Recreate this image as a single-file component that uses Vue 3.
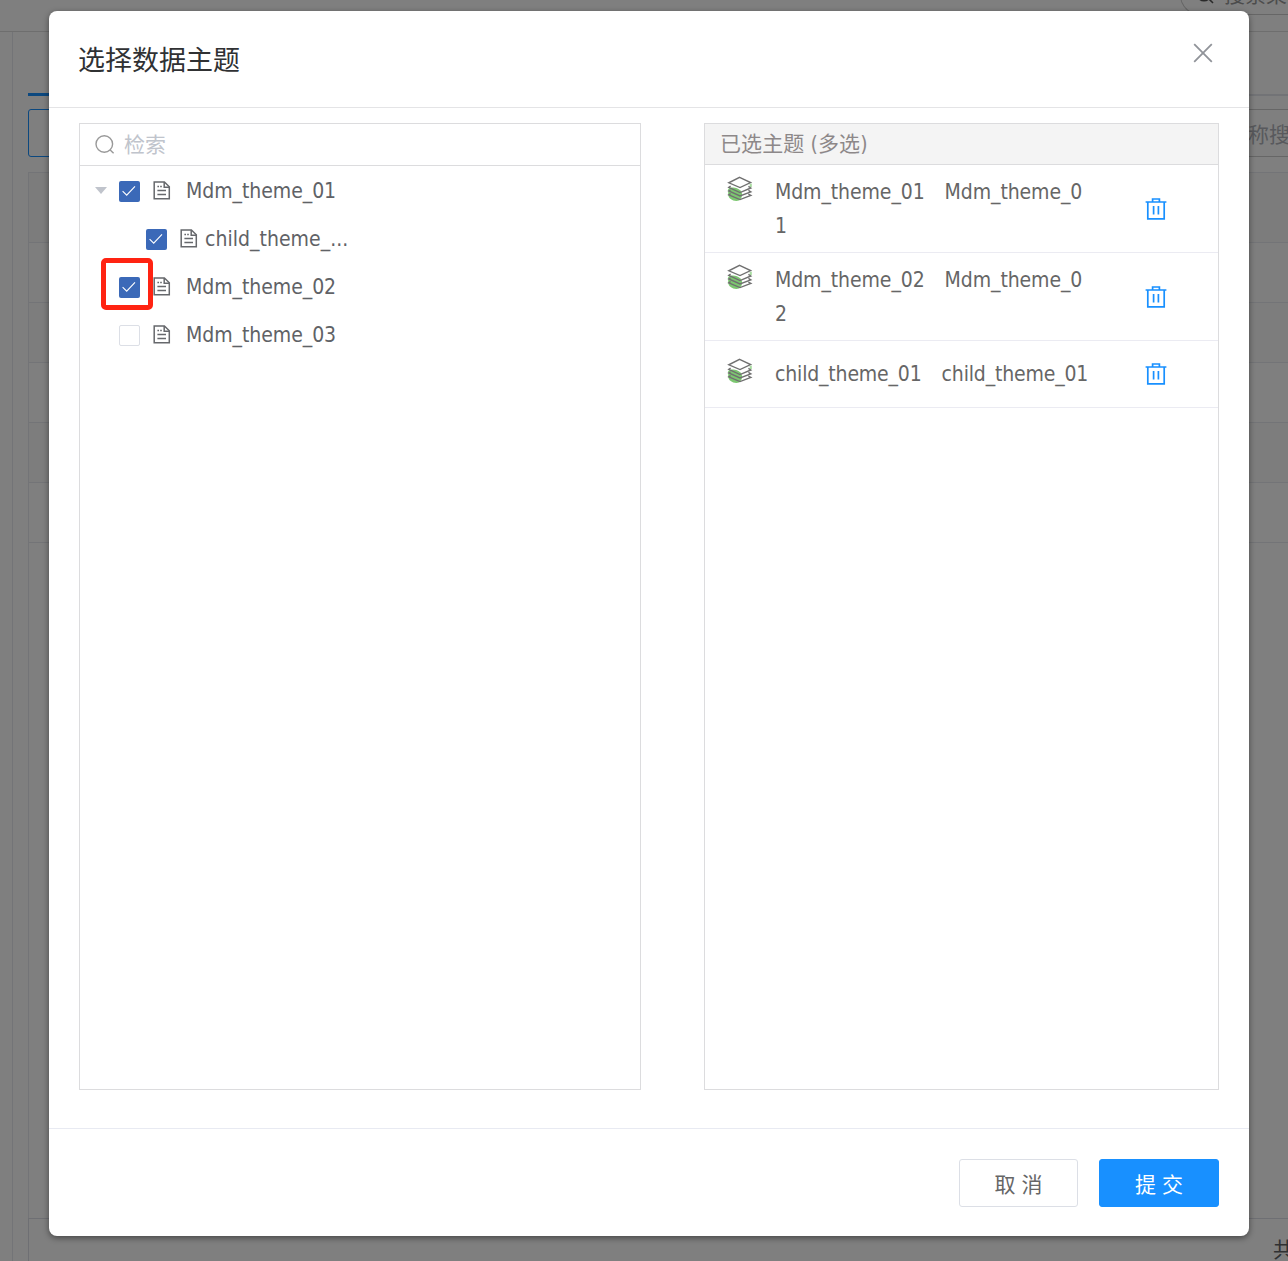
<script setup>
import { ref } from 'vue'

const tree = ref([
  { label: 'Mdm_theme_01', checked: true, open: true, child: false },
  { label: 'child_theme_...', checked: true, open: false, child: true },
  { label: 'Mdm_theme_02', checked: true, open: false, child: false, marked: true },
  { label: 'Mdm_theme_03', checked: false, open: false, child: false }
])

const selected = ref([
  { code: 'Mdm_theme_01', name: 'Mdm_theme_01' },
  { code: 'Mdm_theme_02', name: 'Mdm_theme_02' },
  { code: 'child_theme_01', name: 'child_theme_01' }
])

const tableRows = [0, 1, 2, 3, 4]
</script>

<template>
  <div class="app">
    <div class="page">
      <div class="topbar">
        <div class="top-search">
          <svg width="18" height="18" viewBox="0 0 18 18" fill="none" stroke="#555" stroke-width="1.6">
            <circle cx="8" cy="8" r="6.8" /><path d="M13 13l4 4" />
          </svg>
          <span>搜索菜单</span>
        </div>
      </div>
      <div class="body">
        <div class="side"></div>
        <div class="main">
          <div class="tabs"><div class="tab"></div></div>
          <div class="tools">
            <div class="tool-btn"></div>
            <div class="tool-search">称搜索</div>
          </div>
          <div class="table">
            <div class="thead"></div>
            <div v-for="r in tableRows" :key="r" class="trow"></div>
          </div>
          <div class="pager">共 5 条</div>
        </div>
      </div>
    </div>

    <div class="mask">
      <div class="dialog">
        <header class="head">
          <h1>选择数据主题</h1>
          <svg class="close" width="20" height="20" viewBox="0 0 20 20" fill="none" stroke="#909399" stroke-width="1.8">
            <path d="M1.2 1.2L18.8 18.8M18.8 1.2L1.2 18.8" />
          </svg>
        </header>

        <div class="content">
          <section class="panel left">
            <div class="search">
              <svg width="20" height="20" viewBox="0 0 20 20" fill="none" stroke="#999" stroke-width="1.4">
                <circle cx="9.3" cy="9" r="8.3" /><path d="M15.2 14.9L18.6 18.2" />
              </svg>
              <span>检索</span>
            </div>
            <div v-for="n in tree" :key="n.label" class="node" :class="{ child: n.child }">
              <span class="caret"><i v-if="n.open"></i></span>
              <span class="check" :class="{ on: n.checked }">
                <svg v-if="n.checked" width="21" height="21" viewBox="0 0 21 21" fill="none" stroke="#fff" stroke-width="1.1">
                  <path d="M3.6 10.2L7.7 14.2L16 5.4" />
                </svg>
                <span v-if="n.marked" class="marker"></span>
              </span>
              <svg class="doc" width="18" height="19" viewBox="0 0 18 19" fill="none" stroke="#66686c" stroke-width="1.5">
                <path d="M1.2 .9H11.4L16.3 5.8V17.8H1.2Z" />
                <path d="M11.2 1V6.2H16.2M4.4 5.6H6M7.2 5.6H8.8M4.4 9.6H13M4.4 13.5H13" />
              </svg>
              <span class="label">{{ n.label }}</span>
            </div>
          </section>

          <section class="panel right">
            <div class="caption">已选主题 (多选)</div>
            <div v-for="s in selected" :key="s.code" class="item">
              <div class="info">
                <svg class="layers" width="26" height="26" viewBox="0 0 26 26" fill="none">
                  <path d="M1.2 13C5 10.5 10 11.5 13.5 14.5C16 17.5 15.5 22 12 24.5C7 26 1.2 23 1.2 18.5Z" fill="#7cc770" />
                  <path d="M22.5 8l2.3-.6v3.6l-1.8.8z" fill="#a9dda1" />
                  <g stroke="#707070" stroke-width="1.4">
                    <path d="M12.6 1.4L23.6 6.6L13 11.6L1.8 6.8Z" fill="#fff" />
                    <path d="M3.6 10.2L1.8 11.4L13 16.6L23.8 12L21.4 10.4" />
                    <path d="M3.6 14L1.8 15L13 20L23.8 15.8L21.4 14.4M3.6 17.6L1.8 18.8L13 23.6L23.8 19.4L21.4 18.2" />
                  </g>
                </svg>
                <p class="names"><span>{{ s.code }}</span><span class="second">{{ s.name }}</span></p>
              </div>
              <svg class="trash" width="22" height="22" viewBox="0 0 22 22" fill="none" stroke="#1890ff" stroke-width="1.7">
                <path d="M.6 4H21.4M7.6 4V1H14.4V4M2.8 4V20.8H19.2V4" />
                <path d="M8.6 8V16.6M13.4 8V16.6" />
              </svg>
            </div>
          </section>
        </div>

        <footer class="foot">
          <button class="btn">取 消</button>
          <button class="btn primary">提 交</button>
        </footer>
      </div>
    </div>
  </div>
</template>

<style>
html, body { margin: 0; overflow: hidden; }
</style>

<style scoped>
* { box-sizing: border-box; }
.app {
  position: relative;
  width: 1288px;
  height: 1261px;
  overflow: hidden;
  font-family: "DejaVu Sans Condensed", "Noto Sans CJK SC", sans-serif;
  font-size: 21px;
  color: #606266;
}
.page { height: 1261px; display: flex; flex-direction: column; background: #fff; overflow: hidden; }
.topbar { height: 32px; flex: none; border-bottom: 1px solid #dcdcdc; display: flex; justify-content: flex-end; }
.top-search {
  width: 109px; height: 41px; margin-top: -26px; margin-right: -1px;
  border: 1px solid #ccc; border-right: 0; border-radius: 20px 0 0 20px;
  display: flex; align-items: flex-end; gap: 10px; padding: 0 0 7px 15px;
  color: #999; line-height: 24px; white-space: nowrap; overflow: hidden;
}
.top-search svg { flex: none; margin-bottom: 3px; }
.body { flex: 1; display: flex; min-height: 0; }
.side { width: 13px; border-right: 1px solid #e6e8ee; }
.main { flex: 1; min-width: 0; padding-left: 15px; display: flex; flex-direction: column; }
.tabs { height: 64px; flex: none; border-bottom: 2px solid #e4e7ed; display: flex; align-items: flex-end; }
.tab { width: 120px; height: 3px; margin-bottom: -2px; background: #1890ff; }
.tools { margin-top: 13px; height: 48px; flex: none; display: flex; justify-content: space-between; }
.tool-btn { width: 120px; border: 1px solid #1890ff; border-radius: 3px; }
.tool-search {
  width: 240px; border: 1px solid #ccc; border-right: 0; padding-left: 199px;
  line-height: 50px; color: #b0b3ba; white-space: nowrap; overflow: hidden;
}
.table { margin-top: 15px; flex: 1; border: 1px solid #e6e8ee; border-width: 1px 0 0 1px; }
.thead { height: 70px; background: #f9f9f9; border-bottom: 1px solid #e6e8ee; }
.trow { height: 60px; border-bottom: 1px solid #e6e8ee; }
.trow:nth-child(odd) { background: #fafafa; }
.trow:nth-child(2) { background: #fcfcfc; }
.pager { height: 43px; flex: none; border: 1px solid #dcdfe6; border-width: 1px 0 0 1px; padding-left: 1244px; line-height: 63px; white-space: nowrap; overflow: hidden; }

.mask { position: absolute; inset: 0; background: rgba(0, 0, 0, .5); padding: 11px 39px 25px 49px; }
.dialog {
  height: 1225px; background: #fff; border-radius: 8px;
  box-shadow: 0 2px 6px rgba(0, 0, 0, .45);
  display: flex; flex-direction: column;
}
.head { height: 97px; flex: none; border-bottom: 1px solid #e4e4e6; display: flex; justify-content: space-between; padding: 30px 36px 0 29px; }
.head h1 { margin: 0; font-size: 27px; font-weight: 400; line-height: 40px; color: #303133; }
.close { margin-top: 2px; }
.content { flex: 1; display: flex; justify-content: space-between; padding: 15px 30px 38px; min-height: 0; }
.panel { border: 1px solid #dcdcde; }
.left { width: 562px; }
.right { width: 515px; }
.search { height: 42px; border-bottom: 1px solid #dcdcde; display: flex; align-items: center; gap: 9px; padding: 0 15px; line-height: 41px; color: #c0c4cc; }
.search span { padding-top: 1px; height: 41px; }
.node { height: 48px; display: flex; align-items: center; padding-left: 15px; line-height: 48px; }
.caret { width: 24px; display: flex; padding-top: 1px; }
.caret i { border: 6px solid transparent; border-top: 7px solid #c0c4cc; border-bottom: 0; }
.check { position: relative; width: 21px; height: 21px; margin-top: 2px; border: 1px solid #dcdfe6; border-radius: 2px; }
.check.on { border: 0; background: #3b69b8; }
.check svg { display: block; }
.doc { margin-left: 13px; }
.label { margin-left: 15px; padding-top: 2px; letter-spacing: -.05px; }
.child .caret { width: 51px; }
.child .label { margin-left: 7px; letter-spacing: .03px; }
.marker { position: absolute; left: -18px; top: -19px; width: 52px; height: 52px; border: 5px solid #ff2312; border-radius: 5px; z-index: 1; }
.caption { height: 41px; background: #f4f4f4; border-bottom: 1px solid #dcdcde; padding-left: 15px; line-height: 41px; color: #8d8889; letter-spacing: .1px; }
.item { min-height: 67px; padding: 10px 51px 9px 22px; border-bottom: 1px solid #ebebf2; display: flex; align-items: center; justify-content: space-between; }
.item:last-child { padding-top: 9px; padding-bottom: 10px; }
.info { display: flex; align-items: flex-start; }
.layers { margin-top: 1px; }
.names { margin: 0 0 0 22px; width: 316px; line-height: 34px; word-break: break-all; letter-spacing: -.09px; color: #666; }
.item:last-child .names { letter-spacing: -.16px; }
.second { margin-left: 20px; }
.foot { height: 108px; flex: none; border-top: 1px solid #e8eaf2; display: flex; justify-content: flex-end; gap: 21px; padding: 30px 30px 0; }
.btn { width: 119px; height: 48px; padding: 0; border: 1px solid #dcdfe6; border-radius: 3px; background: #fff; font: inherit; color: #666; }
.primary { width: 120px; background: #1890ff; border-color: #1890ff; color: #fff; }
</style>
